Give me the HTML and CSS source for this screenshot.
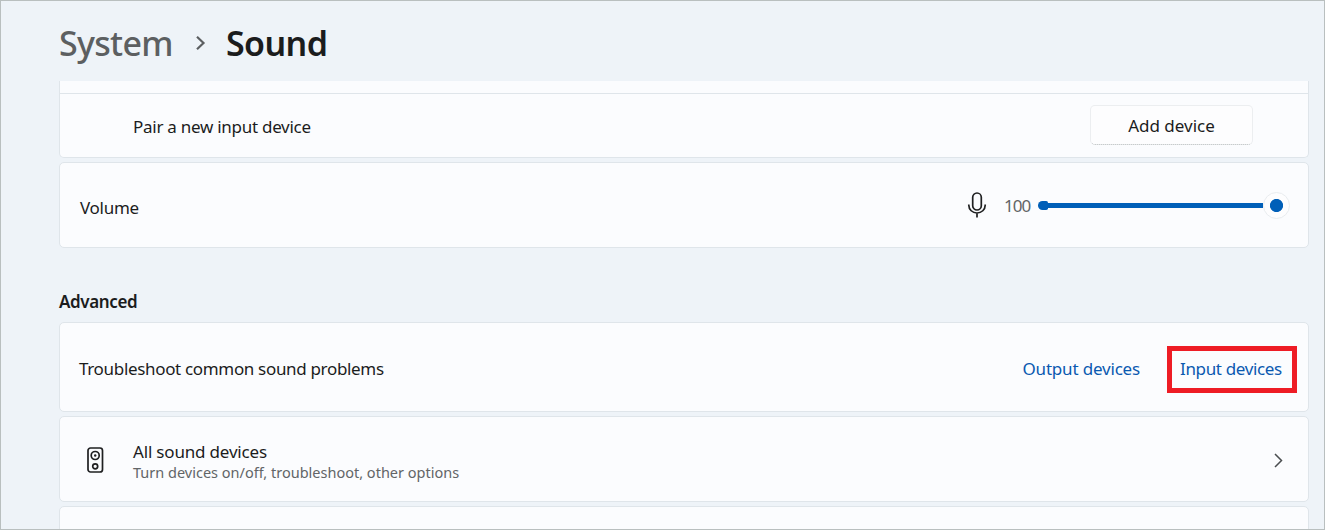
FILE: index.html
```html
<!DOCTYPE html>
<html lang="en">
<head>
  <meta charset="UTF-8" />
  <meta name="viewport" content="width=device-width, initial-scale=1.0"/>
  <title>Sound</title>
  <link rel="stylesheet" href="styles.css">
</head>
<body>
  <div class="window">
    <header class="breadcrumb">
      <span class="crumb">System</span>
      <svg class="crumb-arrow" width="11" height="16" viewBox="0 0 11 16"><path d="M2 1.800 8.500 8 2 14.200"/></svg>
      <h1>Sound</h1>
    </header>

    <main class="content">
      <section class="card card-cut">
        <div class="strip"></div>
        <div class="row row-pair">
          <span class="label">Pair a new input device</span>
          <button class="button">Add device</button>
        </div>
      </section>

      <section class="card row row-volume">
        <span class="label">Volume</span>
        <div class="volume">
          <svg class="icon" width="20" height="26" viewBox="0 0 20 26">
            <rect x="5.700" y="1" width="8.600" height="17" rx="4.300"/>
            <path d="M1.800 12.500v.8a8.200 7.700 0 0 0 16.400 0v-.8M10 21v4.500"/>
          </svg>
          <span class="value">100</span>
          <div class="slider">
            <div class="track"></div>
            <div class="thumb"></div>
          </div>
        </div>
      </section>

      <h2>Advanced</h2>

      <section class="card row row-trouble">
        <span class="label">Troubleshoot common sound problems</span>
        <a class="link">Output devices</a>
        <a class="link marked">Input devices</a>
      </section>

      <section class="card row row-devices">
        <svg class="icon" width="17" height="26" viewBox="0 0 17 26">
          <rect x="1" y="1" width="14.500" height="24" rx="2.500"/>
          <circle cx="8.200" cy="8.500" r="4"/>
          <circle class="dot" cx="8.200" cy="8.500" r="1.200"/>
          <circle cx="8.200" cy="19.300" r="2.500"/>
        </svg>
        <div class="text">
          <div class="title">All sound devices</div>
          <div class="hint">Turn devices on/off, troubleshoot, other options</div>
        </div>
        <svg class="row-arrow" width="9" height="15" viewBox="0 0 9 15"><path d="M1 1l6.500 6.500L1 14"/></svg>
      </section>

      <section class="card card-next"></section>
    </main>
  </div>
</body>
</html>
```
FILE: styles.css
```css
* {
  box-sizing: border-box;
}

body {
  margin: 0;
  font-family: "Noto Sans", "Open Sans", sans-serif;
  font-size: 17px;
  line-height: 24px;
  color: #1b1c1d;
}

.window {
  height: 530px;
  padding: 0 15px 0 58px;
  background: #eef3f8;
  border: 1px solid #b9bfbf;
  overflow: hidden;
}

.breadcrumb {
  display: flex;
  align-items: center;
  height: 80px;
  padding-top: 4px;
  font-size: 34px;
  line-height: 46px;
  letter-spacing: -0.7px;
}

.crumb {
  width: 136px;
  padding-bottom: 1px;
  font-weight: 500;
  color: #5c5f61;
}

.crumb-arrow {
  margin-right: 20px;
  fill: none;
  stroke: #5c5f61;
  stroke-width: 2.200;
}

h1 {
  margin: 0;
  padding-bottom: 1px;
  font-size: 34px;
  font-weight: 600;
  letter-spacing: -0.6px;
}

.card {
  margin-bottom: 4px;
  background: #fbfcfe;
  border: 1px solid #dfe5ea;
  border-radius: 5px;
}

.row {
  display: flex;
  align-items: center;
}

.label {
  flex: 1;
  white-space: nowrap;
  letter-spacing: -0.27px;
}

.card-cut {
  height: 77px;
  border-top: none;
  border-radius: 0 0 5px 5px;
}

.strip {
  height: 13px;
  border-bottom: 1px solid #dfe5ea;
}

.row-pair {
  height: 63px;
  padding: 0 55px 0 73px;
}

.row-pair .label {
  padding-top: 2px;
}

.button {
  width: 163px;
  height: 40px;
  margin-bottom: 2px;
  padding: 2px 0 0;
  font: inherit;
  color: inherit;
  background: #fdfdfe;
  border: 1px solid #eceef0;
  border-bottom: 1px dotted #aeb4b6;
  border-radius: 5px;
}

.row-volume {
  height: 86px;
  padding: 0 18px 0 20px;
}

.row-volume .label {
  padding-top: 6px;
}

.volume {
  display: flex;
  align-items: center;
}

.icon {
  fill: none;
  stroke: #1f2021;
  stroke-width: 1.700;
}

.icon .dot {
  fill: #1f2021;
  stroke: none;
}

.value {
  width: 34px;
  margin-left: 17px;
  padding-top: 2px;
  color: #626567;
  letter-spacing: -1px;
}

.slider {
  display: flex;
  align-items: center;
  width: 252px;
}

.track {
  flex: 1;
  height: 5px;
  background: linear-gradient(#005fb8, #005fb8) 4px 0 no-repeat;
}

.track::before {
  content: "";
  display: block;
  width: 10px;
  height: 9px;
  margin-top: -2px;
  background: #005fb8;
  border-radius: 5px 2px 2px 5px;
}

.thumb {
  width: 27px;
  height: 27px;
  background: radial-gradient(circle, #005fb8 6.200px, #fdfdfe 6.900px);
  border: 1px solid #e9ecef;
  border-radius: 50%;
}

h2 {
  height: 70px;
  margin: 0;
  padding-top: 38px;
  font-size: 17px;
  font-weight: 600;
  letter-spacing: -0.37px;
}

.row-trouble {
  height: 90px;
  padding: 4px 11px 0 19px;
}

.row-trouble .label {
  letter-spacing: -0.33px;
}

.link {
  color: #0a59b0;
  letter-spacing: -0.18px;
  white-space: nowrap;
}

.marked {
  display: flex;
  align-items: center;
  width: 130px;
  height: 47px;
  margin-left: 27px;
  padding-left: 8px;
  border: 5px solid #ee1c25;
  letter-spacing: -0.35px;
}

.row-devices {
  height: 86px;
  padding: 2px 25px 0 27px;
}

.text {
  flex: 1;
  margin-left: 29px;
}

.title {
  letter-spacing: -0.18px;
}

.hint {
  font-size: 14.500px;
  line-height: 17px;
  color: #626567;
}

.row-arrow {
  fill: none;
  stroke: #4a4d4f;
  stroke-width: 1.500;
}

.card-next {
  height: 60px;
}
```
